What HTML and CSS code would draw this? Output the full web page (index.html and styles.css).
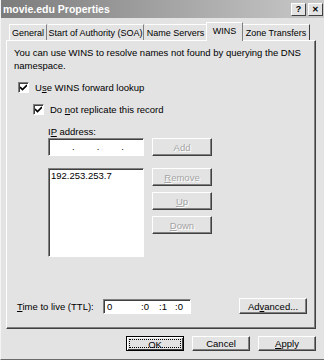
FILE: index.html
```html
<!DOCTYPE html>
<html lang="en">
<head>
  <meta charset="UTF-8">
  <title>movie.edu Properties</title>
  <link rel="stylesheet" href="styles.css">
</head>
<body>
  <div class="window">
    <div class="titlebar">
      <span class="title">movie.edu Properties</span>
      <span class="tbtn">?</span>
      <span class="tbtn close">&#10005;</span>
    </div>

    <div class="tabs">
      <span class="tab first t-general">General</span>
      <span class="tab t-soa">Start of Authority (SOA)</span>
      <span class="tab t-ns">Name Servers</span>
      <span class="tab active t-wins">WINS</span>
      <span class="tab last t-zone">Zone Transfers</span>
    </div>

    <div class="panel">
      <p class="intro">You can use WINS to resolve names not found by querying the DNS namespace.</p>

      <div class="check-row lvl1">
        <span class="checkbox"><svg width="7" height="7" viewBox="0 0 7 7"><path d="M0 3 L2.5 5.5 L7 1" fill="none" stroke="#000" stroke-width="1.6"/></svg></span>
        <span>U<u>s</u>e WINS forward lookup</span>
      </div>
      <div class="check-row lvl2">
        <span class="checkbox"><svg width="7" height="7" viewBox="0 0 7 7"><path d="M0 3 L2.5 5.5 L7 1" fill="none" stroke="#000" stroke-width="1.6"/></svg></span>
        <span>Do <u>n</u>ot replicate this record</span>
      </div>

      <div class="ip-block">
        <div class="label">I<u>P</u> address:</div>
        <div class="ip-row">
          <div class="field ip-field">
            <span class="dot">.</span><span class="dot">.</span><span class="dot">.</span>
          </div>
          <button class="btn disabled">Add</button>
        </div>
        <div class="list-row">
          <div class="field listbox">192.253.253.7</div>
          <div class="side-buttons">
            <button class="btn disabled"><u>R</u>emove</button>
            <button class="btn disabled"><u>U</u>p</button>
            <button class="btn disabled"><u>D</u>own</button>
          </div>
        </div>
      </div>

      <div class="ttl-row">
        <span class="ttl-label"><u>T</u>ime to live (TTL):</span>
        <div class="field ttl-field">
          <span class="d">0</span><span class="h">:0</span><span class="m">:1</span><span class="s">:0</span>
        </div>
        <button class="btn adv">Ad<u>v</u>anced...</button>
      </div>
    </div>

    <div class="footer">
      <button class="btn default"><span class="focus">OK</span></button>
      <button class="btn">Cancel</button>
      <button class="btn"><u>A</u>pply</button>
    </div>
  </div>
</body>
</html>
```

FILE: styles.css
```css
body {
  margin: 0;
  background: #e3e3e3;
  font-family: "Liberation Sans", Arial, sans-serif;
  font-size: 9.5px;
  color: #000;
}
u {
  text-decoration: underline;
  text-underline-offset: 1px;
}
.window {
  width: 323px;
  height: 359px;
  border-left: 1px solid #f4f4f4;
  border-bottom: 1px solid #6a6a6a;
  background: #e3e3e3;
  overflow: hidden;
}
.titlebar {
  height: 18px;
  display: flex;
  align-items: center;
  padding: 0 1px 0 2px;
  background: linear-gradient(to right, #7c7c7c, #c9c9c9);
}
.title {
  flex: 1;
  color: #fff;
  font-weight: bold;
  font-size: 10.5px;
}
.tbtn {
  width: 13px;
  height: 11px;
  margin-left: 2px;
  background: #e3e3e3;
  border: 1px solid;
  border-color: #fff #404040 #404040 #fff;
  font-size: 9px;
  font-weight: bold;
  line-height: 11px;
  text-align: center;
}
.tbtn.close {
  font-size: 8px;
}

/* tabs */
.tabs {
  display: flex;
  align-items: flex-end;
  height: 18px;
  margin: 4px 0 0 8px;
  font-size: 9px;
}
.tab {
  height: 16px;
  line-height: 16px;
  text-align: center;
  white-space: nowrap;
  border-top: 1px solid #fff;
  border-right: 1px solid #808080;
  box-sizing: border-box;
  margin-right: 1px;
}
.tab.first {
  border-left: 1px solid #fff;
}
.t-general { width: 38px; }
.t-soa { width: 96px; }
.t-ns { width: 62px; }
.t-wins { width: 37px; }
.t-zone { width: 67px; }
.tab.active {
  height: 19px;
  line-height: 17px;
  border-left: 1px solid #fff;
  margin: 0 0 -1px -2px;
  background: #e3e3e3;
  position: relative;
}
.tab.last {
  border-right: 1px solid #404040;
}

.panel {
  width: 310px;
  height: 289px;
  margin-left: 5px;
  box-sizing: border-box;
  border: 1px solid;
  border-color: #fff #404040 #404040 #fff;
  box-shadow: inset -1px -1px 0 #808080;
  padding: 5px 7px 0 7px;
}
.intro {
  margin: 0;
  line-height: 13px;
  width: 294px;
}
.check-row {
  display: flex;
  align-items: center;
  height: 13px;
  margin-top: 9px;
}
.lvl1 {
  margin-left: 4px;
}
.lvl2 {
  margin-left: 19px;
}
.checkbox {
  width: 9px;
  height: 9px;
  background: #fff;
  border: 1px solid;
  border-color: #808080 #fff #fff #808080;
  box-shadow: inset 1px 1px 0 #404040;
  display: flex;
  align-items: center;
  justify-content: center;
  margin-right: 6px;
}
.ip-block {
  margin-left: 34px;
}
.label {
  margin-top: 10px;
  line-height: 12px;
}
.ip-row,
.list-row {
  display: flex;
  gap: 8px;
}
.list-row {
  margin-top: 12px;
}
.field {
  background: #fff;
  border: 1px solid;
  border-color: #808080 #fff #fff #808080;
  box-shadow: inset 1px 1px 0 #404040;
  box-sizing: border-box;
}
.ip-field {
  width: 96px;
  height: 18px;
  display: flex;
  gap: 22px;
  padding: 2px 0 0 23px;
}
.listbox {
  width: 96px;
  height: 89px;
  padding: 1px 2px;
  line-height: 12px;
}
.side-buttons {
  display: flex;
  flex-direction: column;
  gap: 6px;
}
.btn {
  width: 60px;
  height: 18px;
  padding: 0;
  font-family: "Liberation Sans", Arial, sans-serif;
  font-size: 9.5px;
  color: #000;
  background: #e3e3e3;
  border: 1px solid;
  border-color: #fff #404040 #404040 #fff;
  box-shadow: inset -1px -1px 0 #808080;
  border-radius: 0;
}
.btn.disabled {
  color: #a4a4a4;
  text-shadow: 1px 1px 0 #fff;
}
.ttl-row {
  display: flex;
  align-items: center;
  height: 16px;
  margin-top: 41px;
  margin-left: 3px;
}
.ttl-label {
  width: 86px;
  white-space: nowrap;
}
.ttl-field {
  width: 88px;
  height: 15px;
  display: flex;
  align-items: center;
  padding-left: 3px;
}
.ttl-field .d { width: 34px; }
.ttl-field .h { width: 18px; }
.ttl-field .m { width: 16px; }
.btn.adv {
  width: 68px;
  height: 16px;
  margin-left: 48px;
}
.footer {
  display: flex;
  justify-content: flex-end;
  gap: 8px;
  margin-top: 7px;
  padding-right: 8px;
}
.footer .btn {
  width: 58px;
  height: 15px;
}
.btn.default {
  border: 1px solid #000;
  box-shadow: inset 1px 1px 0 #fff, inset -1px -1px 0 #404040;
  padding: 2px;
}
.focus {
  display: block;
  height: 100%;
  line-height: 9px;
  box-sizing: border-box;
  border: 1px dotted #000;
}
```
